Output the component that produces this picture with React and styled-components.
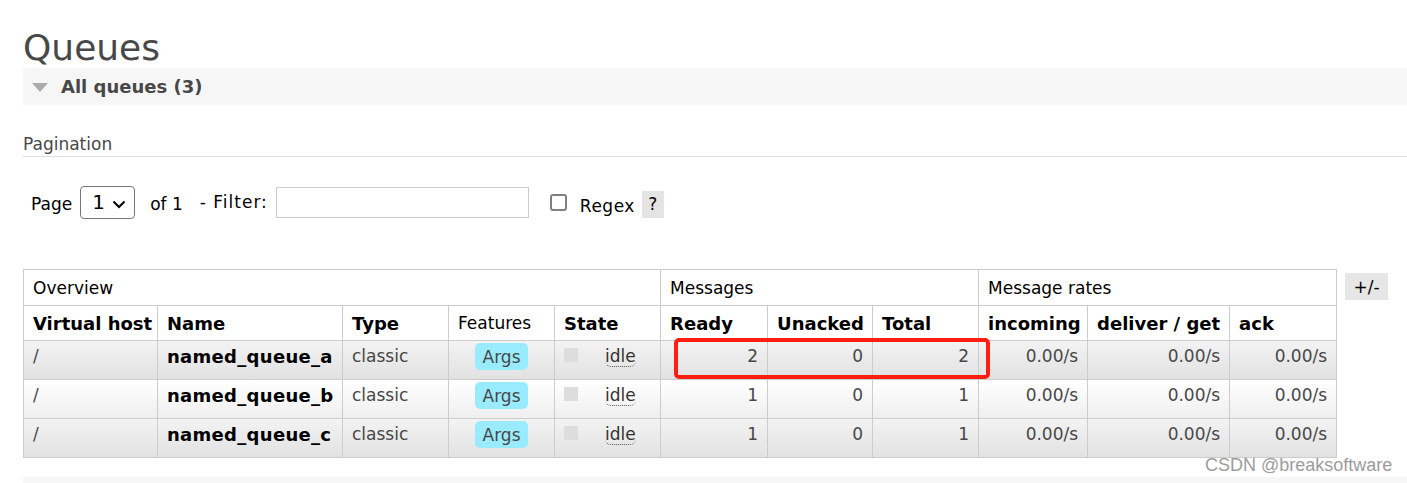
import React from "react";
import styled, { createGlobalStyle } from "styled-components";

const GlobalStyle = createGlobalStyle`
  html, body {
    margin: 0;
    padding: 0;
    background: #fff;
    font-family: "DejaVu Sans", Verdana, sans-serif;
    color: #484848;
    overflow: hidden;
  }
`;

const Page = styled.div`
  position: relative;
  padding-left: 23px;
  width: 1384px;
  height: 483px;
  overflow: hidden;
`;

const Title = styled.h1`
  margin: 27px 0 0;
  font-size: 36px;
  font-weight: normal;
  line-height: 41px;
  color: #484848;
`;

const SectionBar = styled.div`
  display: flex;
  align-items: center;
  height: 37px;
  background: #f6f6f6;
  padding-left: 9px;
  gap: 13px;
  font-size: 18px;
  font-weight: bold;
  color: #484848;
`;

const Triangle = styled.span`
  width: 0;
  height: 0;
  border-left: 8px solid transparent;
  border-right: 8px solid transparent;
  border-top: 9px solid #aaa;
  margin-top: 2px;
`;

const SubTitle = styled.h3`
  margin: 29px 0 0;
  padding-bottom: 2px;
  font-size: 17px;
  font-weight: normal;
  line-height: 20px;
  color: #484848;
  border-bottom: 1px solid #ddd;
`;

const FilterRow = styled.div`
  display: flex;
  align-items: center;
  height: 34px;
  margin-top: 28px;
  padding-left: 8px;
  font-size: 17px;
  color: #000;
`;

const Label = styled.span`
  margin-left: ${(p) => p.$ml || 0}px;
  padding-top: ${(p) => p.$pt || 0}px;
  letter-spacing: ${(p) => p.$ls || 0}px;
`;

const SelectBox = styled.div`
  position: relative;
  margin-left: 8px;
  width: 55px;
  height: 33px;
  box-sizing: border-box;
  border: 1px solid #767676;
  border-radius: 4px;
  display: flex;
  align-items: center;
  padding-left: 11px;
  font-size: 20px;
  color: #000;
`;

const Chevron = styled.svg`
  position: absolute;
  right: 8px;
  top: 13px;
`;

const TextInput = styled.input`
  margin-left: 8px;
  width: 253px;
  height: 31px;
  box-sizing: border-box;
  border: 1px solid #ccc;
  font-size: 17px;
  outline: none;
`;

const CheckBox = styled.span`
  margin-left: 21px;
  width: 17px;
  height: 17px;
  box-sizing: border-box;
  border: 2px solid #808080;
  border-radius: 3px;
`;

const HelpBox = styled.span`
  margin-left: 7px;
  margin-top: 4px;
  width: 22px;
  height: 27px;
  background: #e4e4e4;
  display: flex;
  align-items: center;
  justify-content: center;
  font-size: 17px;
  color: #000;
`;

const TableArea = styled.div`
  position: relative;
  display: flex;
  align-items: flex-start;
  gap: 8px;
  margin-top: 50px;
`;

const Table = styled.table`
  border-collapse: collapse;
  table-layout: fixed;
  width: 1313px;
  font-size: 17px;
`;

const GroupHead = styled.th`
  height: 35px;
  padding: 0 9px;
  border: 1px solid #ccc;
  text-align: left;
  font-weight: normal;
  color: #000;
`;

const ColHead = styled.th`
  height: 34px;
  padding: 0 9px;
  border: 1px solid #ccc;
  text-align: left;
  font-weight: ${(p) => (p.$light ? "normal" : "bold")};
  font-size: ${(p) => (p.$light ? 17 : 18)}px;
  color: #000;
  white-space: nowrap;
`;

const Row = styled.tr`
  background: ${(p) =>
    p.$alt
      ? "linear-gradient(#f3f3f3, #e1e1e1)"
      : "linear-gradient(#ffffff, #efefef)"};
`;

const Cell = styled.td`
  height: 30px;
  padding: 0 9px 8px;
  border: 1px solid #ccc;
  text-align: ${(p) => p.$align || "left"};
  font-weight: ${(p) => (p.$bold ? "bold" : "normal")};
  font-size: ${(p) => (p.$bold ? 18 : 17)}px;
  letter-spacing: ${(p) => (p.$bold ? 0.3 : 0)}px;
  color: ${(p) => (p.$bold ? "#000" : "#484848")};
  white-space: nowrap;
`;

const Badge = styled.span`
  display: inline-block;
  padding: 0 8px;
  height: 27px;
  line-height: 29px;
  border-radius: 5px;
  background: #99ebff;
  color: #484848;
`;

const StatusDot = styled.span`
  display: inline-block;
  width: 14px;
  height: 14px;
  background: #ddd;
  margin-right: 27px;
`;

const Abbr = styled.span`
  color: #333;
  border-bottom: 1px dotted #555;
  border-radius: 0 0 6px 6px;
`;

const ToggleButton = styled.span`
  margin-top: 4px;
  width: 43px;
  height: 27px;
  background: #e6e6e6;
  display: flex;
  align-items: center;
  justify-content: center;
  font-size: 17px;
  color: #000;
`;

const Highlight = styled.div`
  position: absolute;
  left: 651px;
  top: 69px;
  width: 316px;
  height: 41px;
  box-sizing: border-box;
  border: 4px solid #ff1e12;
  border-radius: 5px;
  pointer-events: none;
`;

const NextBar = styled.div`
  margin-top: 19px;
  height: 37px;
  background: #f6f6f6;
`;

const Watermark = styled.div`
  position: absolute;
  left: 1205px;
  top: 455px;
  font-family: "Liberation Sans", Arial, sans-serif;
  font-size: 18px;
  color: #9c9c9c;
  white-space: nowrap;
`;

const widths = [134, 185, 106, 106, 106, 107, 105, 106, 109, 142, 107];

const queues = [
  { name: "named_queue_a", ready: 2, unacked: 0, total: 2 },
  { name: "named_queue_b", ready: 1, unacked: 0, total: 1 },
  { name: "named_queue_c", ready: 1, unacked: 0, total: 1 },
];

export default function App() {
  return (
    <Page>
      <GlobalStyle />
      <Title>Queues</Title>
      <SectionBar>
        <Triangle />
        All queues (3)
      </SectionBar>

      <SubTitle>Pagination</SubTitle>
      <FilterRow>
        <Label $pt={4}>Page</Label>
        <SelectBox>
          1
          <Chevron width="14" height="9" viewBox="0 0 14 9">
            <path d="M1.5 1.5 L7 7 L12.5 1.5" fill="none" stroke="#000" strokeWidth="2" />
          </Chevron>
        </SelectBox>
        <Label $ml={15} $pt={4}>of 1</Label>
        <Label $ml={17} $ls={1}>- Filter:</Label>
        <TextInput />
        <CheckBox />
        <Label $ml={13} $pt={8} $ls={0.5}>Regex</Label>
        <HelpBox>?</HelpBox>
      </FilterRow>

      <TableArea>
        <Table>
          <colgroup>
            {widths.map((w, i) => (
              <col key={i} style={{ width: w }} />
            ))}
          </colgroup>
          <thead>
            <tr>
              <GroupHead colSpan={5}>Overview</GroupHead>
              <GroupHead colSpan={3}>Messages</GroupHead>
              <GroupHead colSpan={3}>Message rates</GroupHead>
            </tr>
            <tr>
              <ColHead>Virtual host</ColHead>
              <ColHead>Name</ColHead>
              <ColHead>Type</ColHead>
              <ColHead $light>Features</ColHead>
              <ColHead>State</ColHead>
              <ColHead>Ready</ColHead>
              <ColHead>Unacked</ColHead>
              <ColHead>Total</ColHead>
              <ColHead>incoming</ColHead>
              <ColHead>deliver / get</ColHead>
              <ColHead>ack</ColHead>
            </tr>
          </thead>
          <tbody>
            {queues.map((q, i) => (
              <Row key={q.name} $alt={i % 2 === 0}>
                <Cell>/</Cell>
                <Cell $bold>{q.name}</Cell>
                <Cell>classic</Cell>
                <Cell $align="center">
                  <Badge>Args</Badge>
                </Cell>
                <Cell>
                  <StatusDot />
                  <Abbr>idle</Abbr>
                </Cell>
                <Cell $align="right">{q.ready}</Cell>
                <Cell $align="right">{q.unacked}</Cell>
                <Cell $align="right">{q.total}</Cell>
                <Cell $align="right">0.00/s</Cell>
                <Cell $align="right">0.00/s</Cell>
                <Cell $align="right">0.00/s</Cell>
              </Row>
            ))}
          </tbody>
        </Table>
        <ToggleButton>+/-</ToggleButton>
        <Highlight />
      </TableArea>
      <NextBar />
      <Watermark>CSDN @breaksoftware</Watermark>
    </Page>
  );
}
